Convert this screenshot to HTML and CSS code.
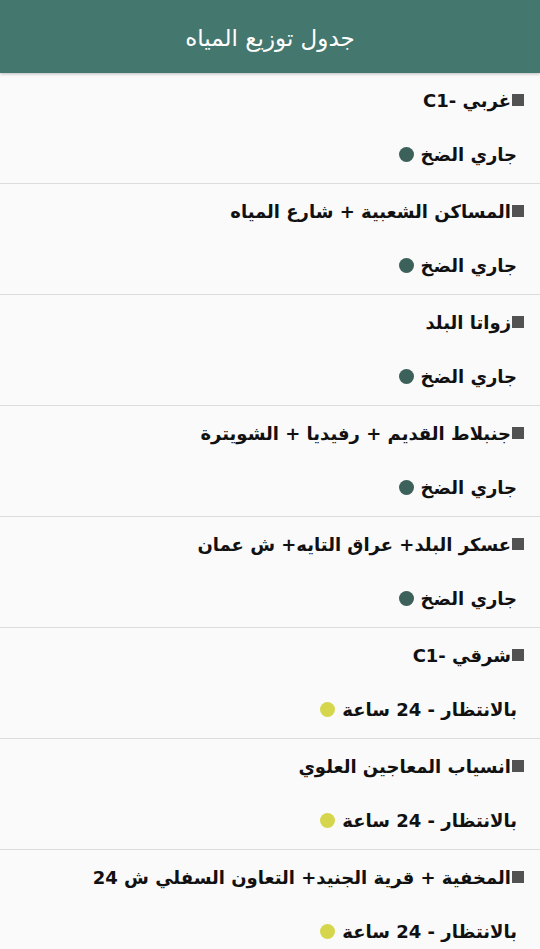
FILE: index.html
```html
<!DOCTYPE html>
<html lang="ar" dir="rtl">
<head>
<meta charset="utf-8">
<title>جدول توزيع المياه</title>
<link rel="stylesheet" href="styles.css">
</head>
<body>
<header class="appbar"><h1 class="appbar-title">جدول توزيع المياه</h1></header>
<main class="list">
  <section class="row">
    <div class="row-title"><span class="bullet"></span><span>غربي -C1</span></div>
    <div class="row-status"><span>جاري الضخ</span><span class="dot dot-on"></span></div>
  </section>
  <section class="row">
    <div class="row-title"><span class="bullet"></span><span>المساكن الشعبية + شارع المياه</span></div>
    <div class="row-status"><span>جاري الضخ</span><span class="dot dot-on"></span></div>
  </section>
  <section class="row">
    <div class="row-title"><span class="bullet"></span><span>زواتا البلد</span></div>
    <div class="row-status"><span>جاري الضخ</span><span class="dot dot-on"></span></div>
  </section>
  <section class="row">
    <div class="row-title"><span class="bullet"></span><span>جنبلاط القديم + رفيديا + الشويترة</span></div>
    <div class="row-status"><span>جاري الضخ</span><span class="dot dot-on"></span></div>
  </section>
  <section class="row">
    <div class="row-title"><span class="bullet"></span><span>عسكر البلد+ عراق التايه+ ش عمان</span></div>
    <div class="row-status"><span>جاري الضخ</span><span class="dot dot-on"></span></div>
  </section>
  <section class="row">
    <div class="row-title"><span class="bullet"></span><span>شرقي -C1</span></div>
    <div class="row-status"><span>بالانتظار - 24 ساعة</span><span class="dot dot-wait"></span></div>
  </section>
  <section class="row">
    <div class="row-title"><span class="bullet"></span><span>انسياب المعاجين العلوي</span></div>
    <div class="row-status"><span>بالانتظار - 24 ساعة</span><span class="dot dot-wait"></span></div>
  </section>
  <section class="row">
    <div class="row-title"><span class="bullet"></span><span>المخفية + قرية الجنيد+ التعاون السفلي ش 24</span></div>
    <div class="row-status"><span>بالانتظار - 24 ساعة</span><span class="dot dot-wait"></span></div>
  </section>
</main>
</body>
</html>
```
FILE: styles.css
```css
html, body {
  margin: 0;
  padding: 0;
  background: #fafafa;
}
body {
  font-family: "DejaVu Sans", "Noto Sans", sans-serif;
  width: 540px;
  height: 949px;
  overflow: hidden;
  direction: rtl;
}
.appbar {
  height: 73px;
  background: #44776e;
  display: flex;
  align-items: center;
  justify-content: center;
  box-shadow: 0 1px 3px rgba(0,0,0,0.25);
  position: relative;
  z-index: 1;
}
.appbar-title {
  margin: 0;
  color: #ffffff;
  font-weight: normal;
  font-size: 23px;
  line-height: 30px;
  padding-top: 2px;
}
.list {
  display: flex;
  flex-direction: column;
}
.row {
  height: 110px;
  border-bottom: 1px solid #dcdcdc;
  box-sizing: content-box;
  display: flex;
  flex-direction: column;
}
.row-title {
  margin-top: 12px;
  padding-right: 16px;
  display: flex;
  align-items: center;
  height: 30px;
  font-weight: bold;
  font-size: 18px;
  color: #111;
}
.bullet {
  width: 12px;
  height: 12px;
  background: #525252;
  margin-left: 1px;
  flex: none;
}
.row-status {
  margin-top: 24px;
  padding-right: 23px;
  display: flex;
  align-items: center;
  gap: 7px;
  height: 30px;
  font-weight: bold;
  font-size: 18px;
  color: #111;
}
.dot {
  width: 15px;
  height: 15px;
  border-radius: 50%;
  flex: none;
}
.dot-on { background: #3c605a; }
.dot-wait { background: #d5d64c; }
```
